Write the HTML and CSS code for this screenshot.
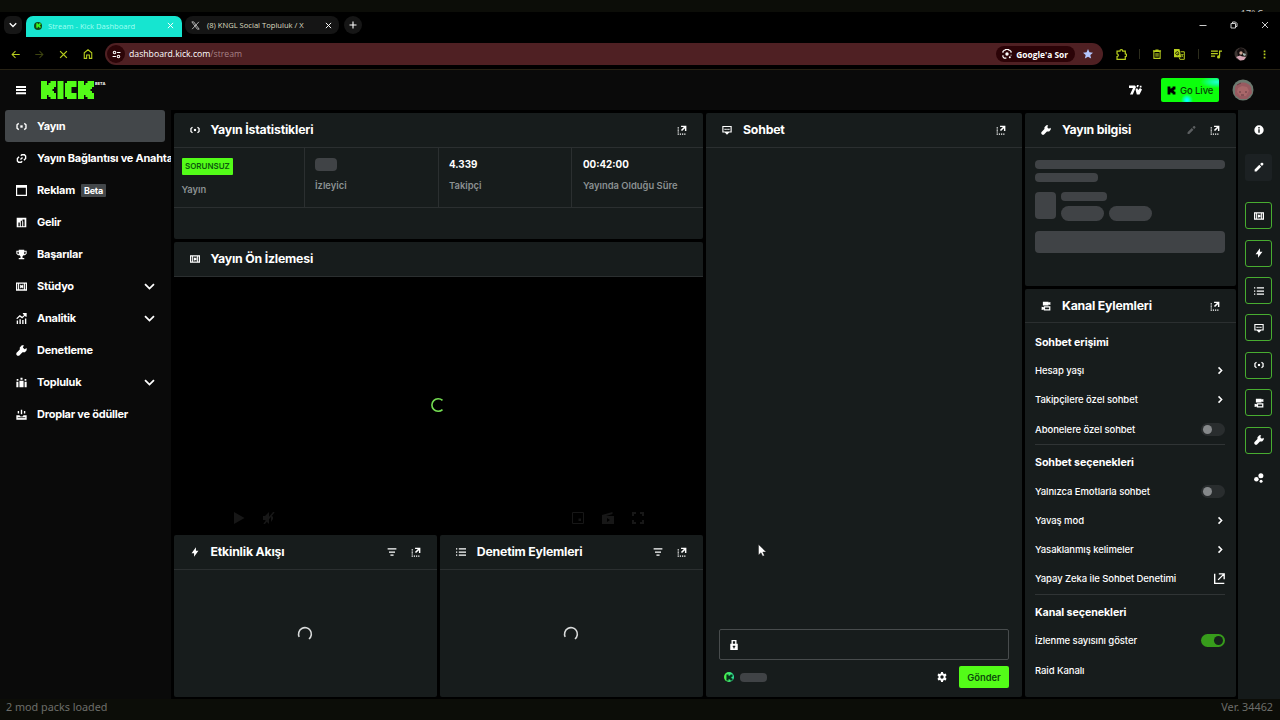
FILE: index.html
```html
<!DOCTYPE html>
<html lang="tr">
<head>
  <meta charset="utf-8" />
  <title>Stream - Kick Dashboard</title>
  <link rel="stylesheet" href="styles.css">
</head>
<body>
  <!-- icons -->
  <svg class="sprite" xmlns="http://www.w3.org/2000/svg">
    <symbol id="i-live" viewBox="0 0 16 16"><path d="M4 3.500L1.500 5.500v5L4 12.500M12 3.500l2.500 2v5l-2.500 2" fill="none" stroke="currentColor" stroke-width="2"/><rect x="6.300" y="6.300" width="3.400" height="3.400"/></symbol>
    <symbol id="i-link" viewBox="0 0 16 16"><path d="M6.500 9.500l3-3M7 4l1.500-1.500h3.800L14 4.500v3.500l-2.500 2.500M9 12l-1.500 1.500H3.700L2 11.500V8l2.500-2.500" fill="none" stroke="currentColor" stroke-width="2"/></symbol>
    <symbol id="i-window" viewBox="0 0 16 16"><path fill-rule="evenodd" d="M0 0h16v16H0zM1.700 4v10.300h12.600V4z"/></symbol>
    <symbol id="i-chart" viewBox="0 0 16 16"><path fill-rule="evenodd" d="M1 1h14v14H1zM3.500 8v5.500h2V8zm3.500-2.500v8h2v-8zm3.500 1.500v6.500h2V3.500h-3V5z"/></symbol>
    <symbol id="i-trophy" viewBox="0 0 16 16"><path fill-rule="evenodd" d="M4 1h8v1.500h3.500V7L13 9h-2L9.500 10.500V13H12v2H4v-2h2.500v-2.500L5 9H3L.5 7V2.500H4zM2 4v2.500l2 1V4zm10 0v3.500l2-1V4z"/></symbol>
    <symbol id="i-studio" viewBox="0 0 16 16"><path fill-rule="evenodd" d="M0 2h16v12H0zM1.800 4v8h1.200V4zM13 4v8h1.200V4zM4.600 4v8h6.800V4z"/><path d="M6 5l5 3-5 3zM9 5.500h1.500v5H9z"/></symbol>
    <symbol id="i-analytics" viewBox="0 0 16 16"><path d="M1 11h2v5H1zM5 9h2v7H5zM9 10h2v6H9zM13 8h2v8h-2zM10 0h5.500v5.500H14L13 4 9 8 5.500 5.500 1.500 9 .5 7.500l5-4.500L9 5.500 12 2.800 10 1.500z"/></symbol>
    <symbol id="i-wrench" viewBox="0 0 16 16"><path d="M11.500.5L10 3.500 12.500 6l3-1.500V7.500L13 10.500H9.500L4.500 15.500H2L.5 14v-2.500L5.500 6.500V3.500L8.500.5z"/></symbol>
    <symbol id="i-community" viewBox="0 0 16 16"><path d="M6.500 1h3v3h-3zM1 3h2.500v2.500H1zM12.500 3H15v2.500h-2.500zM5 5.500h6V15H5zM.5 7H3.500v8H.5zM12.500 7h3v8h-3z"/></symbol>
    <symbol id="i-drops" viewBox="0 0 16 16"><path d="M7 1h2v6.500H7zM2.500 3h2v3.500h-2zM11.500 3h2v3.500h-2zM.5 9H5l1.500 2h3L11 9h4.500v6.500H.500z"/><path d="M2.500 12.500h11" stroke="#0b0b0b"/></symbol>
    <symbol id="i-down" viewBox="0 0 16 16"><path d="M1.500 4.500L8 11l6.500-6.500" fill="none" stroke="currentColor" stroke-width="2.600"/></symbol>
    <symbol id="i-right" viewBox="0 0 16 16"><path d="M4.500 2.500L10 8l-5.500 5.500" fill="none" stroke="currentColor" stroke-width="2.700"/></symbol>
    <symbol id="i-popout" viewBox="0 0 16 16"><path d="M6.500 1H15v8.500h-2.300V5L8 9.700 6.300 8 11 3.300H6.500z"/><path d="M1 3.500h2v2H1zM1 7h2v2H1zM1 10.300h2v1.800H1zM1 13.500h2v2H1zM4.500 13.500h2v2h-2zM8 13.500h2v2H8zM11.500 13.500h2v2h-2z"/></symbol>
    <symbol id="i-external" viewBox="0 0 16 16"><path d="M1 1v14h14M7 1.200h7.800V9M14 2L6 10" fill="none" stroke="currentColor" stroke-width="2"/></symbol>
    <symbol id="i-chat" viewBox="0 0 16 16"><path fill-rule="evenodd" d="M.5 1.500h15V12h-4L8 15.500 4.500 12h-4zM2.300 3.300v6.900h11.400V3.300zM4 6h2v2H4zm3 0h2v2H7zm3 0h2v2h-2z"/></symbol>
    <symbol id="i-pencil" viewBox="0 0 16 16"><path d="M1 15v-3l7.500-7.500 3 3L4 15zM9.700 3.300L12 1h1.500L15 2.500V4l-2.300 2.300z"/></symbol>
    <symbol id="i-info" viewBox="0 0 16 16"><path fill-rule="evenodd" d="M8 .5a7.500 7.500 0 1 1 0 15 7.500 7.500 0 0 1 0-15zM6.900 3.300v2.200h2.200V3.300zM6.900 6.800v5.700h2.200V6.800z"/></symbol>
    <symbol id="i-bolt" viewBox="0 0 16 16"><path d="M9.500.5v5.300h4L6.500 15.500v-5.700H2.500z"/></symbol>
    <symbol id="i-list" viewBox="0 0 16 16"><path d="M0 2h2v2H0zM0 7h2v2H0zM0 12h2v2H0zM4.500 2H16v2H4.500zM4.500 7H16v2H4.500zM4.500 12H16v2H4.500z"/></symbol>
    <symbol id="i-filter" viewBox="0 0 16 16"><path d="M1 2h14v2H1zM3.200 7h9.600v2H3.200zM5.500 12h5v2h-5z"/></symbol>
    <symbol id="i-cams" viewBox="0 0 16 16"><path d="M3 1h9v1.500l3-1v5l-3-1V7H3z"/><path fill-rule="evenodd" d="M4.500 8.500H15V15H4.500v-1.500L1 14.500V9l3.500 1zM6.500 10.300v2.900h6.500v-2.900z"/></symbol>
    <symbol id="i-gear" viewBox="0 0 16 16"><path fill-rule="evenodd" d="M6.500 0h3l.5 2.300 1.500.9 2.300-.8 1.500 2.700-1.700 1.600v2.600l1.700 1.600-1.500 2.700-2.300-.8-1.500.9-.5 2.300h-3L6 13.700l-1.500-.9-2.300.8L.7 10.900l1.700-1.600V6.700L.7 5.100l1.500-2.700 2.300.8L6 2.300zM8 5.300a2.700 2.700 0 1 0 0 5.400 2.700 2.700 0 0 0 0-5.400z"/></symbol>
    <symbol id="i-lock" viewBox="0 0 16 16"><path fill-rule="evenodd" d="M4 0h8v6h2v10H2V6h2zM6.200 2v4h3.600V2zM6 9v2l1.200 1v1.500h1.600V12l1.200-1V9z"/></symbol>
    <symbol id="i-bubbles" viewBox="0 0 16 16"><circle cx="11" cy="4.500" r="4"/><circle cx="3.800" cy="10" r="3.600"/><circle cx="11.300" cy="13" r="2.400"/></symbol>
    <symbol id="i-x" viewBox="0 0 16 16"><path d="M2 2l12 12M14 2L2 14" fill="none" stroke="currentColor" stroke-width="2.200"/></symbol>
    <symbol id="i-back" viewBox="0 0 16 16"><path d="M15.500 8H2M8 2L2 8l6 6" fill="none" stroke="currentColor" stroke-width="1.800"/></symbol>
    <symbol id="i-home" viewBox="0 0 16 16"><path d="M2 15V6l6-4.800L14 6v9h-3.800V9.500H5.800V15z" fill="none" stroke="currentColor" stroke-width="1.700"/></symbol>
    <symbol id="i-tune" viewBox="0 0 16 16"><circle cx="4.500" cy="4.500" r="2.300" fill="none" stroke="currentColor" stroke-width="1.800"/><circle cx="11.500" cy="11.500" r="2.300" fill="none" stroke="currentColor" stroke-width="1.800"/><path d="M9 3.600h6v1.800H9zM1 10.600h6v1.800H1z"/></symbol>
    <symbol id="i-lens" viewBox="0 0 16 16"><path d="M1.500 6V4l2-2h1.300l1-1.200h4.400l1 1.200h1.300l2 2v2M1.500 10v2.500l2 2H7M14.500 9v1.500" fill="none" stroke="currentColor" stroke-width="1.900"/><circle cx="8" cy="8" r="2.700"/><circle cx="12.500" cy="13" r="1.600"/></symbol>
    <symbol id="i-star" viewBox="0 0 16 16"><path d="M8 0l2.300 5.300 5.700.5-4.300 3.800 1.300 5.700L8 12.300l-5 3 1.300-5.700L0 5.800l5.700-.5z"/></symbol>
    <symbol id="i-puzzle" viewBox="0 0 16 16"><path d="M1.500 3h4.200c0-2.600 4.100-2.600 4.100 0h3.700v4c2.600 0 2.600 4 0 4v4h-12v-4c2.600-.4 2.600-3.600 0-4z" fill="none" stroke="currentColor" stroke-width="1.800"/></symbol>
    <symbol id="i-trash" viewBox="0 0 16 16"><path d="M3 4h10v11H3zM1.500 3h13M5.500 1.500h5M6.500 6.500v6M9.500 6.500v6" fill="none" stroke="currentColor" stroke-width="1.700"/></symbol>
    <symbol id="i-translate" viewBox="0 0 16 16"><path d="M0 0h8l2.500 12H0z"/><path d="M9.500 4H15v11H8.500l-1-3" fill="none" stroke="currentColor" stroke-width="1.400"/><path d="M7 5.500A2.300 2.300 0 1 0 7 7H5" fill="none" stroke="#000" stroke-width="1.200"/><path d="M10 8h4M12.500 8c0 2-1 3-2 4M11 9l2.500 3" fill="none" stroke="currentColor"/></symbol>
    <symbol id="i-queue" viewBox="0 0 16 16"><path d="M0 3h10M0 6.700h10M0 10.500h6M12.500 11V3H16" fill="none" stroke="currentColor" stroke-width="1.800"/><circle cx="11" cy="11.500" r="2.300"/></symbol>
    <symbol id="i-xcom" viewBox="0 0 16 16"><path d="M1.500 1.500h3.300l9.700 13h-3.300zM14 1.500L2 14.500" fill="none" stroke="currentColor" stroke-width="1.600"/></symbol>
    <symbol id="i-k" viewBox="0 0 16 16"><path d="M1 1h5v3.500h2V3h2V1h5v5h-2v1.500h-1.500v1H13V10h2v5h-5v-2H8v-1.500H6V15H1z"/></symbol>
  </svg>

  <div class="desk-top"><span>17° C</span></div>

  <div class="browser">
    <div class="tabs">
      <span class="round"><svg class="s8"><use href="#i-down"/></svg></span>
      <div class="tab active">
        <span class="fav"><svg><use href="#i-k"/></svg></span>
        <span class="tab-title">Stream - Kick Dashboard</span>
        <svg class="s7"><use href="#i-x"/></svg>
      </div>
      <div class="tab">
        <span class="fav-x"><svg><use href="#i-xcom"/></svg></span>
        <span class="tab-title">(8) KNGL Social Topluluk / X</span>
        <svg class="s7"><use href="#i-x"/></svg>
      </div>
      <span class="round plus"><svg class="s8" viewBox="0 0 16 16"><path d="M8 1v14M1 8h14" stroke="currentColor" stroke-width="2.200"/></svg></span>
      <div class="win-buttons">
        <svg viewBox="0 0 8 8"><path d="M.5 4.500h7" stroke="currentColor"/></svg>
        <svg viewBox="0 0 8 8"><path d="M1 2.500h4.500V7H1zM2.500 2.500V1h3l1.500 1.500v3H5.500" fill="none" stroke="currentColor"/></svg>
        <svg viewBox="0 0 8 8"><path d="M1 1l6 6M7 1L1 7" stroke="currentColor"/></svg>
      </div>
    </div>
    <div class="toolbar">
      <svg class="s9"><use href="#i-back"/></svg>
      <svg class="s9 fwd"><use href="#i-back"/></svg>
      <svg class="s9"><use href="#i-x"/></svg>
      <svg class="s10"><use href="#i-home"/></svg>
      <div class="address">
        <span class="site-info"><svg class="s9"><use href="#i-tune"/></svg></span>
        <span class="url">dashboard.kick.com<em>/stream</em></span>
        <span class="ask"><svg class="s10"><use href="#i-lens"/></svg>Google'a Sor</span>
        <svg class="s10 star"><use href="#i-star"/></svg>
      </div>
      <div class="extensions">
        <svg class="s11"><use href="#i-puzzle"/></svg>
        <i></i>
        <svg class="s10"><use href="#i-trash"/></svg>
        <svg class="s11"><use href="#i-translate"/></svg>
        <i></i>
        <svg class="s11"><use href="#i-queue"/></svg>
        <svg class="profile" viewBox="0 0 14 14"><circle cx="7" cy="7" r="6.500" fill="#3c3431"/><path d="M3 4l3-3 4 1 1 4-2 3H4z" fill="#150f10"/><circle cx="7" cy="6" r="1.700" fill="#c9a292"/><path d="M2 10l4-1.500 2 1 4 .5-2 3-4 .5z" fill="#d6a5b4"/><path d="M9 6l3 1-1 2-2-1z" fill="#a4b7b2"/></svg>
        <svg class="s9" viewBox="0 0 9 9"><path d="M3.700.5h1.700v1.700H3.700zM3.700 3.600h1.700v1.700H3.700zM3.700 6.800h1.700v1.700H3.700z"/></svg>
      </div>
    </div>
  </div>

  <header class="header">
    <svg class="menu" viewBox="0 0 10 10"><path d="M0 1h10v1.900H0zM0 4.100h10V6H0zM0 7.300h10v1.900H0z"/></svg>
    <svg class="logo" viewBox="0 0 54 18" role="img" aria-label="Kick"><path d="M0 0h6v4h1.500V2h2V0H15v6h-2v2h-1.500v2H13v2h2v6H9.500v-2h-2v-2H6v4H0zM16.500 0h6v18h-6zM26 0h9.500v6H30.500v6h5v6H26v-2h-2V2h2zM37 0h6v4h1.500V2h2V0H53v6h-2v2h-1.500v2H51v2h2v6h-6.500v-2h-2v-2H43v4h-6z"/></svg>
    <span class="beta-mark">BETA</span>
    <div class="header-right">
      <svg class="seven" viewBox="0 0 13 10"><path d="M0 .5h6L7 2 3.800 9.500H1L4 3H0zM6.500 4.500L8 3l1.300 2L11 3l2 1.500-2.500 5H7.800zM8 0h1.800L9 2.200 7.500 2zM10.800.8h1.700v1.700h-1.700z"/></svg>
      <div class="go-live"><svg class="s9"><use href="#i-k"/></svg>Go Live</div>
      <svg class="avatar" viewBox="0 0 22 22"><circle cx="11" cy="11" r="10.500" fill="#6d7a70"/><path d="M3 8c3-6 13-6 16 0l1 6-5 6H8l-5-4z" fill="#985a60"/><path d="M6 9l4-2 5 1 2 4-3 5H8l-3-4z" fill="#a9686a"/><path d="M7 13h2M13 13h2M9 16h3M5 6l4-2" stroke="#643d42"/></svg>
    </div>
  </header>

  <div class="page">
    <nav class="sidebar">
      <a class="item selected"><svg><use href="#i-live"/></svg>Yayın</a>
      <a class="item"><svg><use href="#i-link"/></svg>Yayın Bağlantısı ve Anahtarı</a>
      <a class="item"><svg><use href="#i-window"/></svg>Reklam <b>Beta</b></a>
      <a class="item"><svg><use href="#i-chart"/></svg>Gelir</a>
      <a class="item"><svg><use href="#i-trophy"/></svg>Başarılar</a>
      <a class="item"><svg><use href="#i-studio"/></svg>Stüdyo<svg class="arrow"><use href="#i-down"/></svg></a>
      <a class="item"><svg><use href="#i-analytics"/></svg>Analitik<svg class="arrow"><use href="#i-down"/></svg></a>
      <a class="item"><svg><use href="#i-wrench"/></svg>Denetleme</a>
      <a class="item"><svg><use href="#i-community"/></svg>Topluluk<svg class="arrow"><use href="#i-down"/></svg></a>
      <a class="item"><svg><use href="#i-drops"/></svg>Droplar ve ödüller</a>
    </nav>

    <main class="board">
      <div class="col-main">
        <section class="panel stats">
          <div class="panel-head"><svg><use href="#i-live"/></svg><h2>Yayın İstatistikleri</h2><svg><use href="#i-popout"/></svg></div>
          <div class="stat-grid">
            <div class="stat"><span class="ok">SORUNSUZ</span><span>Yayın</span></div>
            <div class="stat"><span class="skel viewers"></span><span>İzleyici</span></div>
            <div class="stat"><strong>4.339</strong><span>Takipçi</span></div>
            <div class="stat"><strong>00:42:00</strong><span>Yayında Olduğu Süre</span></div>
          </div>
        </section>

        <section class="panel preview">
          <div class="panel-head"><svg><use href="#i-studio"/></svg><h2>Yayın Ön İzlemesi</h2></div>
          <div class="video">
            <svg class="spinner green" viewBox="0 0 16 16"><path d="M12.500 3.400A6.300 6.300 0 1 0 12.500 12.600"/></svg>
            <div class="controls">
              <svg viewBox="0 0 12 12"><path d="M1 0l10.500 6L1 12z"/></svg>
              <svg viewBox="0 0 12 12"><path d="M0 4h2l4-4v12L2 8H0zM8 3l2 2v2L8 10"/><path d="M11 0L1 12" stroke="currentColor" stroke-width="1.500"/></svg>
              <svg class="push" viewBox="0 0 12 12"><path d="M.5.500h11v11H.500z" fill="none" stroke="currentColor"/><path d="M6.500 6.500H9v2.500H6.500z"/></svg>
              <svg viewBox="0 0 12 12"><path fill-rule="evenodd" d="M0 3l10.500-3v2L4 4h8v8H0zM5 6v4l3-2z"/></svg>
              <svg viewBox="0 0 12 12"><path d="M1 4V1h3M8 1h3v3M11 8v3H8M4 11H1V8" fill="none" stroke="currentColor" stroke-width="2"/></svg>
            </div>
          </div>
        </section>

        <div class="feeds">
          <section class="panel">
            <div class="panel-head"><svg><use href="#i-bolt"/></svg><h2>Etkinlik Akışı</h2><svg><use href="#i-filter"/></svg><svg><use href="#i-popout"/></svg></div>
            <div class="loading"><svg class="spinner" viewBox="0 0 16 16"><path d="M2.200 10.800A6.400 6.400 0 1 1 12 13"/></svg></div>
          </section>
          <section class="panel">
            <div class="panel-head"><svg><use href="#i-list"/></svg><h2>Denetim Eylemleri</h2><svg><use href="#i-filter"/></svg><svg><use href="#i-popout"/></svg></div>
            <div class="loading"><svg class="spinner" viewBox="0 0 16 16"><path d="M2.200 10.800A6.400 6.400 0 1 1 12 13"/></svg></div>
          </section>
        </div>
      </div>

      <section class="panel chat">
        <div class="panel-head"><svg><use href="#i-chat"/></svg><h2>Sohbet</h2><svg><use href="#i-popout"/></svg></div>
        <div class="chat-input"><svg class="s10"><use href="#i-lock"/></svg></div>
        <div class="chat-foot">
          <span class="kicks"><svg><use href="#i-k"/></svg></span>
          <span class="skel points"></span>
          <svg class="s10 gear"><use href="#i-gear"/></svg>
          <button class="send">Gönder</button>
        </div>
      </section>

      <div class="col-side">
        <section class="panel info">
          <div class="panel-head"><svg><use href="#i-wrench"/></svg><h2>Yayın bilgisi</h2><svg class="dim"><use href="#i-pencil"/></svg><svg><use href="#i-popout"/></svg></div>
          <div class="info-body">
            <div class="skel line"></div>
            <div class="skel line short"></div>
            <div class="category">
              <div class="skel thumb"></div>
              <div class="tags">
                <div class="skel name"></div>
                <div class="skel tag"></div>
                <div class="skel tag"></div>
              </div>
            </div>
            <div class="skel bar"></div>
          </div>
        </section>

        <section class="panel actions">
          <div class="panel-head"><svg><use href="#i-cams"/></svg><h2>Kanal Eylemleri</h2><svg><use href="#i-popout"/></svg></div>
          <div class="group">
            <h3>Sohbet erişimi</h3>
            <div class="row">Hesap yaşı<svg class="s9"><use href="#i-right"/></svg></div>
            <div class="row">Takipçilere özel sohbet<svg class="s9"><use href="#i-right"/></svg></div>
            <div class="row">Abonelere özel sohbet<span class="switch"></span></div>
          </div>
          <div class="group">
            <h3>Sohbet seçenekleri</h3>
            <div class="row">Yalnızca Emotlarla sohbet<span class="switch"></span></div>
            <div class="row">Yavaş mod<svg class="s9"><use href="#i-right"/></svg></div>
            <div class="row">Yasaklanmış kelimeler<svg class="s9"><use href="#i-right"/></svg></div>
            <div class="row">Yapay Zeka ile Sohbet Denetimi<svg class="s11"><use href="#i-external"/></svg></div>
          </div>
          <div class="group">
            <h3>Kanal seçenekleri</h3>
            <div class="row">İzlenme sayısını göster<span class="switch on"></span></div>
            <div class="row">Raid Kanalı</div>
          </div>
        </section>
      </div>
    </main>

    <aside class="rail">
      <span class="rail-btn"><svg><use href="#i-info"/></svg></span>
      <span class="rail-btn edit"><svg><use href="#i-pencil"/></svg></span>
      <span class="rail-btn framed first"><svg><use href="#i-studio"/></svg></span>
      <span class="rail-btn framed"><svg><use href="#i-bolt"/></svg></span>
      <span class="rail-btn framed"><svg><use href="#i-list"/></svg></span>
      <span class="rail-btn framed"><svg><use href="#i-chat"/></svg></span>
      <span class="rail-btn framed"><svg><use href="#i-live"/></svg></span>
      <span class="rail-btn framed"><svg><use href="#i-cams"/></svg></span>
      <span class="rail-btn framed"><svg><use href="#i-wrench"/></svg></span>
      <span class="rail-btn"><svg><use href="#i-bubbles"/></svg></span>
    </aside>
  </div>

  <footer class="status"><span>2 mod packs loaded</span><span>Ver. 34462</span></footer>

  <svg class="cursor" viewBox="0 0 9 13"><path d="M.5.500v10.500l2.500-2.300 1.700 3.600 1.700-.8-1.600-3.500h3.400z" fill="#fff" stroke="#111" stroke-width=".4"/></svg>
</body>
</html>
```
FILE: styles.css
```css
* {
  box-sizing: border-box;
}
body {
  margin: 0;
  width: 1280px;
  height: 720px;
  overflow: hidden;
  display: flex;
  flex-direction: column;
  background: #0c0d08;
  color: #fff;
  font-family: Inter, "Liberation Sans", sans-serif;
  font-size: 10px;
}
svg {
  fill: currentColor;
  flex: none;
}
.sprite {
  position: absolute;
  width: 0;
  height: 0;
}
h2, h3 {
  margin: 0;
}
.s7 { width: 7px; height: 7px; }
.s8 { width: 8px; height: 8px; }
.s9 { width: 9px; height: 9px; }
.s10 { width: 10px; height: 10px; }
.s11 { width: 11px; height: 11px; }

/* desktop strip above the browser */
.desk-top {
  flex: none;
  height: 12px;
  overflow: hidden;
  text-align: right;
  padding: 8px 17px 0 0;
  font: 9px/11px "Open Sans", sans-serif;
  color: #ccc;
}

/* browser */
.browser {
  flex: none;
  height: 58px;
  background: #000;
  border-bottom: 1px solid #272214;
  font-family: "Open Sans", "Noto Sans", sans-serif;
}
.tabs {
  display: flex;
  align-items: center;
  height: 26px;
  padding: 2px 0 2px 4px;
}
.round {
  display: flex;
  align-items: center;
  justify-content: center;
  width: 18px;
  height: 18px;
  border-radius: 6px;
  background: #161616;
}
.plus {
  border-radius: 50%;
  margin-left: 5px;
}
.tab {
  display: flex;
  align-items: center;
  height: 18px;
  width: 154px;
  padding: 0 7px 0 6px;
  border-radius: 8px;
  background: #151515;
  color: #dcdcc0;
  font-size: 7.600px;
  font-weight: 500;
}
.tab svg.s7 {
  margin-left: auto;
  color: #fff;
}
.tab.active {
  height: 21px;
  width: 156px;
  margin: 2px 3px 0 4px;
  padding: 0 8px 1px;
  border-radius: 7px 7px 0 0;
  background: #16e5d0;
  color: #a0fff2;
}
.fav {
  display: flex;
  align-items: center;
  justify-content: center;
  width: 8px;
  height: 8px;
  margin-right: 6px;
  border-radius: 50%;
  background: #104a18;
  color: #3aff20;
}
.fav svg {
  width: 5px;
  height: 5px;
}
.fav-x {
  display: flex;
  margin-right: 7px;
}
.fav-x svg {
  width: 9px;
  height: 9px;
  color: #bbb;
}
.tab-title {
  white-space: nowrap;
}
.win-buttons {
  display: flex;
  gap: 23px;
  margin-left: auto;
  padding-right: 11px;
}
.win-buttons svg {
  width: 8px;
  height: 8px;
  color: #ccc;
}
.toolbar {
  display: flex;
  align-items: center;
  height: 31px;
  padding: 1px 11px 0;
  color: #b9cf1e;
}
.toolbar > svg {
  margin-right: 15px;
}
.toolbar .fwd {
  transform: scaleX(-1);
  color: #3d4410;
}
.toolbar > svg.s10 {
  margin-right: 12px;
}
.address {
  display: flex;
  align-items: center;
  width: 998px;
  height: 22px;
  padding: 0 10px 0 2px;
  border-radius: 11px;
  background: #4f2023;
  color: #fff;
}
.site-info {
  display: flex;
  align-items: center;
  justify-content: center;
  width: 18px;
  height: 18px;
  margin-right: 4px;
  border-radius: 50%;
  background: #2c0508;
}
.url {
  font-size: 8.700px;
  font-weight: 500;
}
.url em {
  font-style: normal;
  font-weight: 400;
  color: #a68286;
}
.ask {
  display: flex;
  align-items: center;
  gap: 4px;
  height: 16px;
  margin-left: auto;
  padding: 0 7px 0 6px;
  border-radius: 8px;
  background: #2b0307;
  font-size: 8.400px;
  font-weight: 700;
}
.star {
  margin-left: 8px;
  color: #b5c7ff;
}
.extensions {
  display: flex;
  align-items: center;
  justify-content: space-between;
  flex: 1;
  padding-left: 13px;
}
.extensions i {
  width: 1px;
  height: 10px;
  background: #2c2c1c;
}
.profile {
  width: 14px;
  height: 14px;
}

/* kick header */
.header {
  flex: none;
  display: flex;
  align-items: center;
  height: 40px;
  padding: 0 26px 0 16px;
  background: #0a0a0a;
}
.menu {
  width: 10px;
  height: 10px;
}
.logo {
  width: 54px;
  height: 18px;
  margin-left: 15px;
  color: #53fc18;
}
.beta-mark {
  align-self: flex-start;
  padding-top: 11px;
  font-size: 4px;
  line-height: 5px;
  font-weight: 700;
}
.header-right {
  display: flex;
  align-items: center;
  margin-left: auto;
}
.seven {
  width: 13px;
  height: 10px;
  margin-right: 19px;
}
.go-live {
  display: flex;
  align-items: center;
  gap: 4px;
  width: 58px;
  height: 24px;
  margin-right: 13px;
  padding-left: 6px;
  border-radius: 2px;
  background:
    radial-gradient(circle at 26px 22px, #0ff 0, #0ff 1px, transparent 6px),
    radial-gradient(ellipse at 56px 4px, #1fffd0 0, #10ff90 7px, transparent 17px),
    #0cff0c;
  color: #083c08;
  font-size: 9.500px;
  font-weight: 500;
  letter-spacing: -.1px;
  white-space: nowrap;
}
.go-live svg {
  color: #000;
}
.avatar {
  width: 22px;
  height: 22px;
}

/* page */
.page {
  display: flex;
  height: 589px;
  background: #000;
}
.sidebar {
  width: 171px;
  padding: 0 0 0 5px;
  overflow: hidden;
  background: #0a0a0a;
}
.item {
  display: flex;
  align-items: center;
  width: 160px;
  height: 32px;
  padding-left: 11px;
  border-radius: 3px;
  font-size: 11px;
  font-weight: 700;
  letter-spacing: -.24px;
  white-space: nowrap;
}
.item svg {
  width: 11px;
  height: 11px;
  margin-right: 10px;
}
.item.selected {
  background: #43474a;
}
.item b {
  margin-left: 6px;
  padding: 0 3px;
  border-radius: 1px;
  background: #43474a;
  font-size: 9px;
  line-height: 13px;
  font-weight: 700;
}
.item .arrow {
  margin: 0 10px 0 auto;
}
.board {
  display: flex;
  gap: 3px;
  width: 1064px;
  margin-left: 2.500px;
  padding: 2.500px 2px 2px 0;
}
.panel {
  display: flex;
  flex-direction: column;
  border-radius: 2px;
  background: #171c1c;
  overflow: hidden;
}
.panel-head {
  flex: none;
  display: flex;
  align-items: center;
  height: 35px;
  padding: 0 16px;
  border-bottom: 1px solid #2b2f30;
}
.panel-head svg {
  width: 10px;
  height: 10px;
  margin-left: 14px;
}
.panel-head svg:first-child {
  margin-left: 0;
}
.panel-head h2 {
  flex: 1;
  padding-left: 11px;
  font-size: 12.300px;
  line-height: 16px;
  font-weight: 700;
  letter-spacing: -.2px;
  white-space: nowrap;
}
.panel-head .dim {
  color: #5b5e60;
  width: 9px;
}
.col-main {
  display: flex;
  flex-direction: column;
  gap: 3px;
  width: 529.500px;
}
.stats {
  height: 126.500px;
}
.stat-grid {
  display: grid;
  grid-template-columns: 131.500px 134px 133px 1fr;
  height: 60px;
  border-bottom: 1px solid #2b2f30;
}
.stat {
  display: flex;
  flex-direction: column;
  align-items: flex-start;
  padding: 10.500px 0 0 10px;
  border-right: 1px solid #2b2f30;
  color: #8b9192;
  font-size: 9.400px;
  line-height: 13px;
  font-weight: 600;
  white-space: nowrap;
}
.stat:first-child {
  padding-left: 8px;
}
.stat:last-child {
  padding-left: 11px;
  border-right: 0;
}
.stat strong {
  margin-bottom: 8px;
  color: #fff;
  font-size: 9.800px;
  font-weight: 700;
}
.ok {
  margin-bottom: 8px;
  padding: 0 3.500px;
  border-radius: 1px;
  background: #53fc18;
  color: #0d5a0c;
  font-size: 8px;
  line-height: 17px;
}
.skel {
  border-radius: 4px;
  background: #404346;
}
.viewers {
  width: 22px;
  height: 13px;
  margin-bottom: 8px;
}
.preview {
  height: 291px;
  background: #000;
}
.preview .panel-head {
  background: #171c1c;
}
.video {
  flex: 1;
  display: flex;
  flex-direction: column;
  align-items: center;
}
.spinner {
  width: 16px;
  height: 16px;
}
.spinner path {
  fill: none;
  stroke: #d8dada;
  stroke-width: 1.600;
}
.spinner.green {
  margin-top: 120px;
}
.spinner.green path {
  stroke: #74dc52;
}
.controls {
  display: flex;
  gap: 18px;
  align-self: stretch;
  margin-top: 99px;
  padding: 0 59px;
  color: #171717;
}
.controls svg {
  width: 12px;
  height: 12px;
}
.controls .push {
  margin-left: auto;
}
.feeds {
  flex: 1;
  display: grid;
  grid-template-columns: 1fr 1fr;
  gap: 3px;
  margin-top: -1px;
}
.loading {
  flex: 1;
  display: flex;
  align-items: center;
  justify-content: center;
}
.chat {
  width: 316px;
}
.chat-input {
  display: flex;
  align-items: center;
  height: 31px;
  margin: auto 13px 6px;
  padding-left: 9px;
  border: 1px solid #484c4d;
  border-radius: 2px;
}
.chat-foot {
  display: flex;
  align-items: center;
  height: 22px;
  margin: 0 13px 9px;
  padding-left: 5px;
}
.kicks {
  display: flex;
  align-items: center;
  justify-content: center;
  width: 10px;
  height: 10px;
  border-radius: 50%;
  background: linear-gradient(90deg, #4df542, #2de0a0);
  color: #08331c;
}
.kicks svg {
  width: 7px;
  height: 7px;
}
.points {
  width: 27px;
  height: 9px;
  margin-left: 6px;
}
.gear {
  margin-left: auto;
}
.send {
  width: 50px;
  height: 22px;
  margin-left: 12px;
  padding: 0;
  border: 0;
  border-radius: 2px;
  background: #53fc18;
  color: #0b4a0a;
  font: 600 9.400px Inter, sans-serif;
}
.col-side {
  flex: 1;
  display: flex;
  flex-direction: column;
  gap: 3px;
}
.info {
  height: 173.500px;
}
.info-body {
  padding: 12px 11px 0 10px;
}
.line {
  height: 9px;
  margin-bottom: 4.500px;
}
.line.short {
  width: 63px;
  height: 9px;
  margin-bottom: 9.500px;
}
.category {
  display: flex;
  gap: 5px;
}
.thumb {
  width: 21px;
  height: 27px;
}
.tags {
  display: flex;
  flex-wrap: wrap;
  column-gap: 5px;
  row-gap: 5px;
  width: 110px;
}
.name {
  width: 46px;
  height: 9px;
  margin-right: 40px;
}
.tag {
  width: 43px;
  height: 15px;
  border-radius: 8px;
}
.bar {
  height: 22px;
  margin-top: 10px;
}
.actions {
  flex: 1;
}
.actions .panel-head {
  height: 34px;
}
.group {
  margin: 0 11px 0 10px;
  padding-top: 5.500px;
}
.group + .group {
  padding-top: 4px;
  border-top: 1px solid #303435;
}
.group h3 {
  font-size: 10.700px;
  line-height: 27.500px;
  font-weight: 700;
  letter-spacing: -.1px;
}
.row {
  display: flex;
  align-items: center;
  justify-content: space-between;
  height: 29.300px;
  font-size: 9.500px;
  font-weight: 500;
  letter-spacing: -.07px;
}
.switch {
  width: 24px;
  height: 13px;
  padding: 2px;
  border-radius: 7px;
  background: #292d2e;
}
.switch::before {
  content: "";
  display: block;
  width: 9px;
  height: 9px;
  border-radius: 50%;
  background: #85888a;
}
.switch.on {
  background: #379c1b;
}
.switch.on::before {
  margin-left: auto;
  background: #16211b;
}
.rail {
  display: flex;
  flex-direction: column;
  align-items: center;
  gap: 10.400px;
  flex: 1;
  padding-top: 6.500px;
  background: #151a1a;
}
.rail-btn {
  display: flex;
  flex: none;
  align-items: center;
  justify-content: center;
  width: 27px;
  height: 27px;
  border-radius: 3px;
}
.rail-btn svg {
  width: 10px;
  height: 10px;
}
.edit {
  background: #1c2123;
}
.framed {
  border: 1px solid #48ad30;
}
.first {
  margin-top: 11px;
}

.status {
  display: flex;
  justify-content: space-between;
  padding: 0 7px 0 6px;
  font: 10.800px/15px "Noto Sans", sans-serif;
  color: #6c6d6a;
}
.cursor {
  position: absolute;
  left: 758px;
  top: 544px;
  width: 9px;
  height: 13px;
}
```
